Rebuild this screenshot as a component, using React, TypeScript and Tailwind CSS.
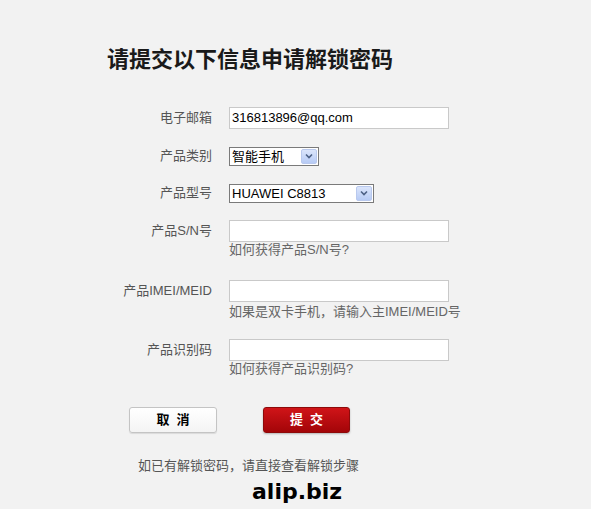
const cjk = "font-['Liberation_Sans','Noto_Sans_CJK_SC',sans-serif]";

function Label({ children }: { children: React.ReactNode }) {
  return (
    <div className="w-[212px] shrink-0 text-right text-[13px] text-[#555] leading-[22px]">
      {children}
    </div>
  );
}

function TextBox({ value }: { value?: string }) {
  return (
    <div className="w-[220px] h-[22px] border border-[#c9c9c9] bg-white px-[2px] text-[13px] leading-[20px] text-black">
      {value}
    </div>
  );
}

function Select({ value, width }: { value: string; width: string }) {
  return (
    <div className={`${width} h-[19px] border border-[#7a7a7a] bg-white flex items-center justify-between pl-[2px] pr-px`}>
      <span className="text-[13px] leading-[17px] text-black">{value}</span>
      <span className="w-[16px] h-[15px] rounded-[2px] border border-[#b9c9ee] bg-gradient-to-b from-[#dbe5fb] to-[#b7cbf5] flex items-center justify-center">
        <svg width="8" height="6" viewBox="0 0 8 6">
          <path d="M1 1.5 L4 4.5 L7 1.5" fill="none" stroke="#4d6185" strokeWidth="1.6" />
        </svg>
      </span>
    </div>
  );
}

function Hint({ children }: { children: React.ReactNode }) {
  return <div className="ml-[229px] text-[13px] leading-[16px] text-[#666]">{children}</div>;
}

export default function App() {
  return (
    <div className={`min-h-[509px] w-full bg-[#f2f2f2] ${cjk}`}>
      <h1 className="pl-[107px] pt-[45px] text-[22px] leading-[30px] font-bold text-[#1a1a1a]">
        请提交以下信息申请解锁密码
      </h1>

      <div className="mt-[32px] flex items-center gap-[17px]">
        <Label>电子邮箱</Label>
        <TextBox value="316813896@qq.com" />
      </div>

      <div className="mt-[16px] flex items-center gap-[17px]">
        <Label>产品类别</Label>
        <Select value="智能手机" width="w-[90px]" />
      </div>

      <div className="mt-[15px] flex items-center gap-[17px]">
        <Label>产品型号</Label>
        <Select value="HUAWEI C8813" width="w-[145px]" />
      </div>

      <div className="mt-[16px] flex items-center gap-[17px]">
        <Label>产品S/N号</Label>
        <TextBox />
      </div>
      <Hint>如何获得产品S/N号?</Hint>

      <div className="mt-[22px] flex items-center gap-[17px]">
        <Label>产品IMEI/MEID</Label>
        <TextBox />
      </div>
      <Hint>
        <span className="block mt-[2px]">如果是双卡手机，请输入主IMEI/MEID号</span>
      </Hint>

      <div className="mt-[19px] flex items-center gap-[17px]">
        <Label>产品识别码</Label>
        <TextBox />
      </div>
      <Hint>如何获得产品识别码?</Hint>

      <div className="mt-[30px] ml-[129px] flex gap-[46px]">
        <button className="w-[88px] h-[26px] rounded-[3px] border border-[#c4c4c4] bg-gradient-to-b from-white to-[#f4f4f4] text-[13px] font-bold text-black shadow-[0_1px_1px_rgba(0,0,0,0.1)]">
          取&nbsp;&nbsp;消
        </button>
        <button className="w-[87px] h-[26px] rounded-[3px] border border-[#8e0a0a] bg-gradient-to-b from-[#d01418] to-[#a30508] text-[13px] font-bold text-white shadow-[0_1px_2px_rgba(0,0,0,0.25)]">
          提&nbsp;&nbsp;交
        </button>
      </div>

      <div className="mt-[25px] ml-[138px] text-[13px] leading-[16px] text-[#555]">
        如已有解锁密码，请直接查看解锁步骤
      </div>

      <div className="mt-[5px] ml-[252px] font-['DejaVu_Sans',sans-serif] text-[22px] leading-[26px] font-bold text-black">
        alip.biz
      </div>
    </div>
  );
}
